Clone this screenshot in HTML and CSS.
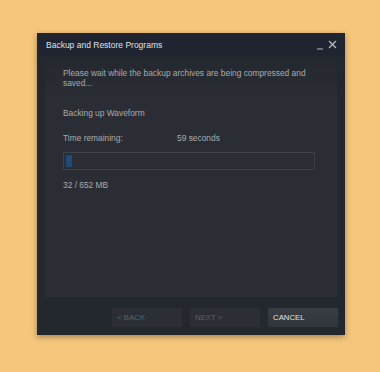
FILE: index.html
```html
<!DOCTYPE html>
<html lang="en">
<head>
    <meta charset="UTF-8">
    <title>Backup and Restore Programs</title>
    <link rel="stylesheet" href="styles.css">
</head>
<body>
    <div class="window">
        <div class="titlebar">
            <span class="title">Backup and Restore Programs</span>
            <span class="controls">
                <svg width="22" height="10" viewBox="0 0 22 10">
                    <line x1="1" y1="9" x2="7" y2="9" stroke="#9aa0a6" stroke-width="1.2"/>
                    <line x1="13" y1="1" x2="20" y2="8" stroke="#b6bbc0" stroke-width="1.2"/>
                    <line x1="20" y1="1" x2="13" y2="8" stroke="#b6bbc0" stroke-width="1.2"/>
                </svg>
            </span>
        </div>
        <div class="panel">
            <p class="intro">Please wait while the backup archives are being compressed and saved...</p>
            <p class="status">Backing up Waveform</p>
            <div class="time-row">
                <span class="label">Time remaining:</span>
                <span>59 seconds</span>
            </div>
            <div class="progress">
                <div class="progress-fill" style="width: 6px"></div>
            </div>
            <p class="size">32 / 652 MB</p>
        </div>
        <div class="footer">
            <button class="btn disabled">&lt; BACK</button>
            <button class="btn disabled">NEXT &gt;</button>
            <button class="btn cancel">CANCEL</button>
        </div>
    </div>
</body>
</html>
```

FILE: styles.css
```css
body {
    margin: 0;
    padding: 33px 0 0 37px;
    background-color: #f5c67c;
    font-family: Arial, "Liberation Sans", sans-serif;
    height: 372px;
    box-sizing: border-box;
}

.window {
    width: 308px;
    height: 302px;
    background-color: #23272e;
    box-shadow: 0 2px 6px rgba(0, 0, 0, 0.35);
    display: flex;
    flex-direction: column;
}

.titlebar {
    height: 23px;
    background-color: #1f2430;
    display: flex;
    align-items: center;
    justify-content: space-between;
    padding: 0 7px 0 9px;
}

.title {
    color: #dfe2e6;
    font-size: 8.5px;
}

.controls svg {
    display: block;
}

.panel {
    margin: 0 8px;
    height: 241px;
    background: linear-gradient(#23272e, #2a2e34 40px);
    padding: 12px 18px 0;
    box-sizing: border-box;
    color: #a7acb1;
    font-size: 8.4px;
}

.panel p {
    margin: 0;
}

.intro {
    line-height: 10px;
    width: 252px;
}

.status {
    margin-top: 20px !important;
}

.time-row {
    display: flex;
    margin-top: 15px;
}

.label {
    width: 114px;
}

.progress {
    margin-top: 9px;
    width: 252px;
    height: 18px;
    border: 1px solid #3b414b;
    box-sizing: border-box;
    background-color: #2a2e34;
    padding: 2px;
}

.progress-fill {
    height: 100%;
    background-color: #1f4a78;
}

.size {
    margin-top: 10px !important;
}

.footer {
    display: flex;
    justify-content: flex-end;
    gap: 8px;
    padding: 11px 7px 0;
}

.btn {
    width: 70px;
    height: 19px;
    border: none;
    font-family: Arial, "Liberation Sans", sans-serif;
    font-size: 7.8px;
    text-align: left;
    padding: 0 5px;
}

.disabled {
    background-color: #2b2f35;
    color: #5b6168;
}

.cancel {
    background: linear-gradient(#383d44, #30353b);
    color: #e0e3e6;
}
```
